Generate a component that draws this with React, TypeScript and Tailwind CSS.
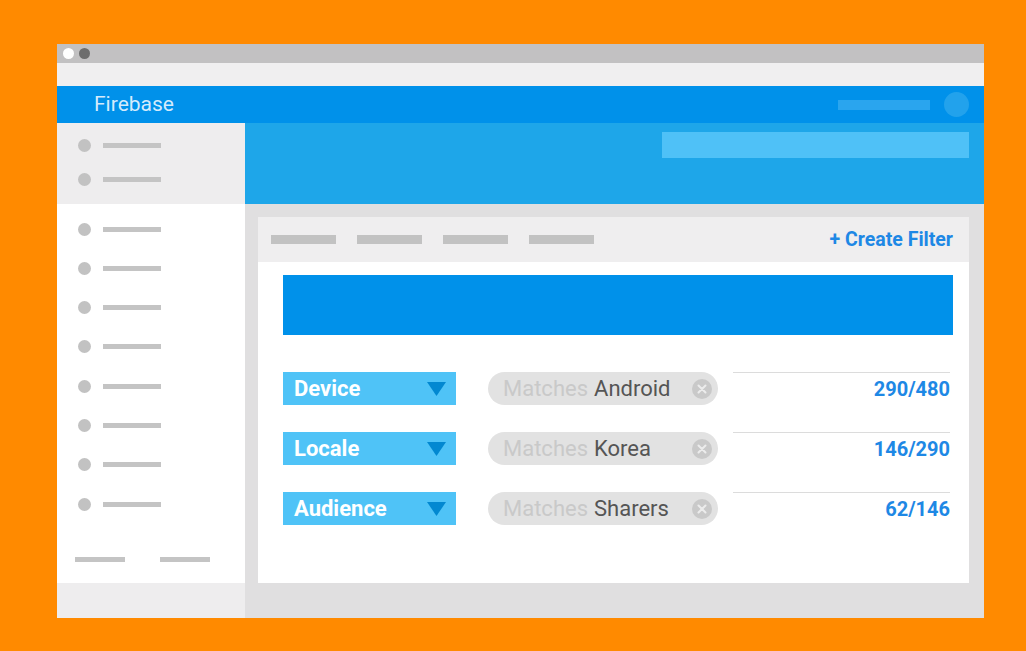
import React from 'react';

const font = { fontFamily: 'Roboto, "Noto Sans", Arial, sans-serif' };

const filters = [
  { label: 'Device', value: 'Android', count: '290/480' },
  { label: 'Locale', value: 'Korea', count: '146/290' },
  { label: 'Audience', value: 'Sharers', count: '62/146' },
];

const NavItem = () => (
  <div className="flex items-center h-[14px] pl-[21px]">
    <span className="w-[13px] h-[13px] rounded-full bg-[#c2c2c2]" />
    <span className="ml-[12px] w-[58px] h-[5px] bg-[#c4c4c4]" />
  </div>
);

const FilterRow = ({ label, value, count }: { label: string; value: string; count: string }) => (
  <div className="flex h-[33px]">
    <div className="w-[173px] bg-[#4fc3f7] flex items-center justify-between pl-[11px] pr-[10px]">
      <span className="text-white font-bold text-[22px] leading-none">{label}</span>
      <svg width="19" height="14" viewBox="0 0 19 14">
        <polygon points="0,0 19,0 9.5,14" fill="#0288d1" />
      </svg>
    </div>
    <div className="ml-[32px] w-[230px] rounded-full bg-[#e2e2e2] flex items-center pl-[15px] pr-[6px]">
      <span className="text-[22px] leading-none text-[#c9c9c9]">Matches</span>
      <span className="ml-[6px] text-[22px] leading-none text-[#555555]">{value}</span>
      <span className="ml-auto w-[20px] h-[20px] rounded-full bg-[#c9c9c9] flex items-center justify-center">
        <svg width="10" height="10" viewBox="0 0 10 10">
          <path d="M1.5 1.5 L8.5 8.5 M8.5 1.5 L1.5 8.5" stroke="#ececec" strokeWidth="2" strokeLinecap="round" />
        </svg>
      </span>
    </div>
    <div className="ml-[15px] w-[217px] border-t border-[#dcdcdc] flex justify-end pt-[6px]">
      <span className="text-[#1e88e5] font-bold text-[20px] leading-none">{count}</span>
    </div>
  </div>
);

const App = () => {
  return (
    <div className="w-[1026px] h-[651px] bg-[#ff8a00] pt-[44px] pl-[57px]" style={font}>
      <div className="w-[927px] h-[574px] flex flex-col">
        {/* window chrome */}
        <div className="h-[19px] bg-[#c2c1c2] flex items-center pl-[6px] gap-[5px]">
          <span className="w-[11px] h-[11px] rounded-full bg-white" />
          <span className="w-[11px] h-[11px] rounded-full bg-[#6d6d6d]" />
        </div>
        <div className="h-[23px] bg-[#f0eff0]" />
        <div className="h-[37px] bg-[#0091ea] flex items-center pl-[37px] pr-[15px]">
          <span className="text-[#d4ebfc] text-[21px] leading-none">Firebase</span>
          <span className="ml-auto w-[92px] h-[10px] bg-[#2aa5ee]" />
          <span className="ml-[14px] w-[25px] h-[25px] rounded-full bg-[#22a2ec]" />
        </div>

        <div className="flex flex-1">
          {/* sidebar */}
          <div className="w-[188px] flex flex-col">
            <div className="h-[81px] bg-[#eeedee] flex flex-col pt-[15px] gap-[20px]">
              <NavItem />
              <NavItem />
            </div>
            <div className="flex-1 bg-white flex flex-col pt-[18px] gap-[25.3px]">
              {Array.from({ length: 8 }).map((_, i) => (
                <NavItem key={i} />
              ))}
              <div className="flex mt-[21px] pl-[18px] gap-[35px]">
                <span className="w-[50px] h-[5px] bg-[#c4c4c4]" />
                <span className="w-[50px] h-[5px] bg-[#c4c4c4]" />
              </div>
            </div>
            <div className="h-[35px] bg-[#eeedee]" />
          </div>

          {/* main */}
          <div className="flex-1 flex flex-col">
            <div className="h-[81px] bg-[#1ea6e9] flex justify-end pt-[9px] pr-[15px]">
              <span className="w-[307px] h-[26px] bg-[#4fc1f7]" />
            </div>
            <div className="flex-1 bg-[#e0dfe0] pt-[13px] pl-[13px] pr-[15px] pb-[35px]">
              <div className="h-full bg-white flex flex-col">
                <div className="h-[45px] bg-[#efeeef] flex items-center pl-[13px] pr-[16px]">
                  <div className="flex gap-[21px]">
                    {Array.from({ length: 4 }).map((_, i) => (
                      <span key={i} className="w-[65px] h-[9px] bg-[#c2c2c2]" />
                    ))}
                  </div>
                  <span className="ml-auto text-[#1e88e5] font-bold text-[19.5px] leading-none">+ Create Filter</span>
                </div>
                <div className="pl-[25px] pr-[16px] pt-[13px]">
                  <div className="h-[60px] bg-[#0091ea]" />
                  <div className="mt-[37px] flex flex-col gap-[27px]">
                    {filters.map((f) => (
                      <FilterRow key={f.label} {...f} />
                    ))}
                  </div>
                </div>
              </div>
            </div>
          </div>
        </div>
      </div>
    </div>
  );
};

export default App;
